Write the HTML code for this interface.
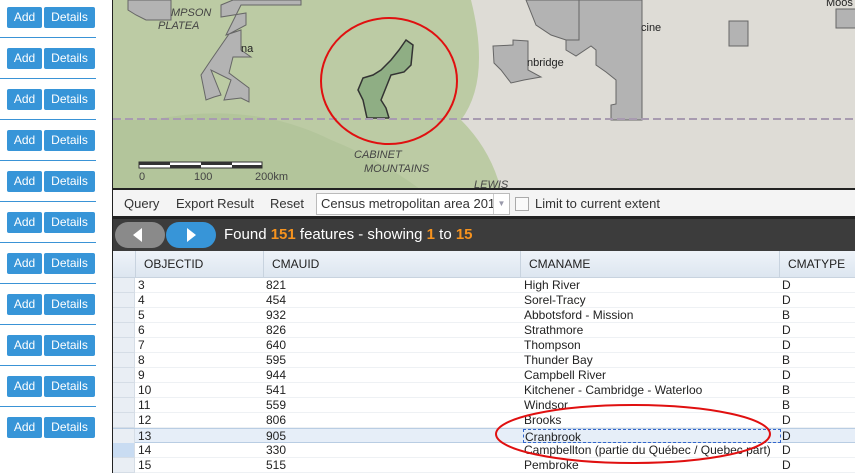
<!DOCTYPE html>
<html><head><meta charset="utf-8"><style>
*{margin:0;padding:0;box-sizing:border-box}
body{width:855px;height:473px;overflow:hidden;background:#fff;font-family:"Liberation Sans",sans-serif;position:relative}
.lp{position:absolute;left:0;top:0;width:112px;height:473px;background:#fff}
.r{position:absolute;left:0;width:96px;height:41px;border-bottom:1px solid #3a93d6}
.b{position:absolute;top:10px;height:21px;background:#3795d8;color:#fff;font-size:12px;line-height:21px;text-align:center;border-radius:2px}
.map{position:absolute;left:112px;top:0;width:743px;height:190px;border-left:1px solid #222;border-bottom:2px solid #222;overflow:hidden}
.tb{position:absolute;left:112px;top:190px;width:743px;height:29px;background:#f4f4f4;border-left:1px solid #222;border-bottom:3px solid #222;font-size:13px;color:#333}
.tb span{position:absolute;top:6px}
.bar{position:absolute;left:112px;top:219px;width:743px;height:32px;background:#3c3c3c;border-left:1px solid #222}
.grid{position:absolute;left:112px;top:251px;width:743px;height:222px;border-left:1px solid #222;background:#fff;font-size:12px;color:#222}
.hd{position:absolute;top:0;height:27px;background:linear-gradient(#eef3f9,#dde6f0);border-right:1px solid #c8d3df;border-bottom:1px solid #c8d3df;font-size:12px;line-height:27px;padding-left:8px;color:#222}
.row{position:absolute;left:0;width:743px;height:15px;border-bottom:1px solid #eef1f4;line-height:14px}
.row span{position:absolute;top:0}
.rh{position:absolute;left:0;width:22px;height:15px;background:#e9eef4;border-bottom:1px solid #d5dde6;border-right:1px solid #d5dde6}
</style></head><body>
<div class="lp">
<div class="r" style="top:-3px"><div class="b" style="left:7px;width:35px">Add</div><div class="b" style="left:44px;width:51px">Details</div></div>
<div class="r" style="top:38px"><div class="b" style="left:7px;width:35px">Add</div><div class="b" style="left:44px;width:51px">Details</div></div>
<div class="r" style="top:79px"><div class="b" style="left:7px;width:35px">Add</div><div class="b" style="left:44px;width:51px">Details</div></div>
<div class="r" style="top:120px"><div class="b" style="left:7px;width:35px">Add</div><div class="b" style="left:44px;width:51px">Details</div></div>
<div class="r" style="top:161px"><div class="b" style="left:7px;width:35px">Add</div><div class="b" style="left:44px;width:51px">Details</div></div>
<div class="r" style="top:202px"><div class="b" style="left:7px;width:35px">Add</div><div class="b" style="left:44px;width:51px">Details</div></div>
<div class="r" style="top:243px"><div class="b" style="left:7px;width:35px">Add</div><div class="b" style="left:44px;width:51px">Details</div></div>
<div class="r" style="top:284px"><div class="b" style="left:7px;width:35px">Add</div><div class="b" style="left:44px;width:51px">Details</div></div>
<div class="r" style="top:325px"><div class="b" style="left:7px;width:35px">Add</div><div class="b" style="left:44px;width:51px">Details</div></div>
<div class="r" style="top:366px"><div class="b" style="left:7px;width:35px">Add</div><div class="b" style="left:44px;width:51px">Details</div></div>
<div class="r" style="top:407px;border:none"><div class="b" style="left:7px;width:35px">Add</div><div class="b" style="left:44px;width:51px">Details</div></div>
</div>
<div class="map">
<svg width="743" height="190" viewBox="112 0 743 190" xmlns="http://www.w3.org/2000/svg">
<rect x="112" y="0" width="743" height="190" fill="#dedcd6"/>
<path d="M112 0H470Q490 80 460 120Q490 150 500 190H112Z" fill="#bccba4"/>
<path d="M150 120Q250 100 330 140Q380 160 420 190H112V120Z" fill="#a9bf91" opacity=".5"/>
<path d="M232 0L220 5V17L245 13V25L228 34L210 60L200 75L205 100L213 97L220 95L210 70L230 80L223 100L240 98L248 102V88L228 73L232 57H250L240 50V30L225 35L240 5H300V0Z" fill="#b3b3b3" stroke="#666"/>
<path d="M127 0V10L135 15L145 20H170V0Z" fill="#b3b3b3" stroke="#666"/>
<path d="M525 0L535 25L550 35L565 40H578V0Z" fill="#b3b3b3" stroke="#666"/>
<path d="M578 0V40H565L565 50L575 56L590 46L595 50V65L605 72L615 80V104L610 105V120H641V0Z" fill="#b3b3b3" stroke="#666"/>
<path d="M492 46L512 45V40L527 41V70L540 77L523 80L510 83L500 70L493 63Z" fill="#b3b3b3" stroke="#666"/>
<rect x="728" y="21" width="19" height="25" fill="#b3b3b3" stroke="#666"/>
<rect x="835" y="9" width="20" height="19" fill="#b3b3b3" stroke="#666"/>
<path d="M405 40L412 45L410 65L403 72L390 75L384 90L380 100L385 108L388 118H366L362 100L357 90L362 78L372 75L380 70L390 60L398 50Z" fill="#8fae84" stroke="#333" stroke-width="1.5"/>
<line x1="112" y1="119" x2="855" y2="119" stroke="#a89bb0" stroke-width="2" stroke-dasharray="8 4"/>
<ellipse cx="388" cy="81" rx="68" ry="63" fill="none" stroke="#e01010" stroke-width="2"/>
<rect x="138" y="162" width="123" height="6" fill="#fff" stroke="#333"/>
<rect x="138" y="162" width="31" height="3" fill="#333"/><rect x="200" y="162" width="31" height="3" fill="#333"/>
<rect x="169" y="165" width="31" height="3" fill="#333"/><rect x="231" y="165" width="30" height="3" fill="#333"/>
<g font-family="Liberation Sans" font-size="11" fill="#444">
<text x="138" y="180">0</text><text x="193" y="180">100</text><text x="254" y="180">200km</text>
<text x="170" y="16" font-style="italic">MPSON</text><text x="157" y="29" font-style="italic">PLATEA</text>
<text x="353" y="158" font-style="italic">CABINET</text><text x="363" y="172" font-style="italic">MOUNTAINS</text>
<text x="473" y="188" font-style="italic">LEWIS</text>
<text x="240" y="52" fill="#222">na</text><text x="526" y="66" fill="#222">nbridge</text><text x="640" y="31" fill="#222">cine</text><text x="825" y="6" fill="#222">Moos</text>
</g>
</svg>
</div>
<div class="tb">
<span style="left:11px">Query</span><span style="left:63px">Export Result</span><span style="left:157px">Reset</span>
<div style="position:absolute;left:203px;top:3px;width:194px;height:22px;background:#fff;border:1px solid #bbb;font-size:13px;line-height:20px;padding-left:4px;color:#333;overflow:hidden;white-space:nowrap">Census metropolitan area 201<div style="position:absolute;right:0;top:0;width:16px;height:20px;border-left:1px solid #ccc;background:#fff;color:#99a;font-size:8px;text-align:center">▼</div></div>
<div style="position:absolute;left:402px;top:7px;width:14px;height:14px;border:1px solid #aaa;background:#fafafa"></div>
<span style="left:422px">Limit to current extent</span>
</div>
<div class="bar">
<div style="position:absolute;left:2px;top:3px;width:50px;height:26px;border-radius:13px;background:#8a8a8a"></div>
<div style="position:absolute;left:20px;top:9px;width:0;height:0;border-top:7px solid transparent;border-bottom:7px solid transparent;border-right:9px solid #fff"></div>
<div style="position:absolute;left:53px;top:3px;width:50px;height:26px;border-radius:13px;background:#3795d8"></div>
<div style="position:absolute;left:74px;top:9px;width:0;height:0;border-top:7px solid transparent;border-bottom:7px solid transparent;border-left:9px solid #fff"></div>
<div style="position:absolute;left:111px;top:7px;color:#fff;font-size:15px">Found <b style="color:#f7931e">151</b> features - showing <b style="color:#f7931e">1</b> to <b style="color:#f7931e">15</b></div>
</div>
<div class="grid">
<div class="hd" style="left:0;width:23px;padding:0"></div>
<div class="hd" style="left:23px;width:128px">OBJECTID</div>
<div class="hd" style="left:151px;width:257px">CMAUID</div>
<div class="hd" style="left:408px;width:259px">CMANAME</div>
<div class="hd" style="left:667px;width:76px">CMATYPE</div>
<div class="row" style="top:27px"><div class="rh"></div><span style="left:25px">3</span><span style="left:153px">821</span><span style="left:411px">High River</span><span style="left:669px">D</span></div>
<div class="row" style="top:42px"><div class="rh"></div><span style="left:25px">4</span><span style="left:153px">454</span><span style="left:411px">Sorel-Tracy</span><span style="left:669px">D</span></div>
<div class="row" style="top:57px"><div class="rh"></div><span style="left:25px">5</span><span style="left:153px">932</span><span style="left:411px">Abbotsford - Mission</span><span style="left:669px">B</span></div>
<div class="row" style="top:72px"><div class="rh"></div><span style="left:25px">6</span><span style="left:153px">826</span><span style="left:411px">Strathmore</span><span style="left:669px">D</span></div>
<div class="row" style="top:87px"><div class="rh"></div><span style="left:25px">7</span><span style="left:153px">640</span><span style="left:411px">Thompson</span><span style="left:669px">D</span></div>
<div class="row" style="top:102px"><div class="rh"></div><span style="left:25px">8</span><span style="left:153px">595</span><span style="left:411px">Thunder Bay</span><span style="left:669px">B</span></div>
<div class="row" style="top:117px"><div class="rh"></div><span style="left:25px">9</span><span style="left:153px">944</span><span style="left:411px">Campbell River</span><span style="left:669px">D</span></div>
<div class="row" style="top:132px"><div class="rh"></div><span style="left:25px">10</span><span style="left:153px">541</span><span style="left:411px">Kitchener - Cambridge - Waterloo</span><span style="left:669px">B</span></div>
<div class="row" style="top:147px"><div class="rh"></div><span style="left:25px">11</span><span style="left:153px">559</span><span style="left:411px">Windsor</span><span style="left:669px">B</span></div>
<div class="row" style="top:162px"><div class="rh"></div><span style="left:25px">12</span><span style="left:153px">806</span><span style="left:411px">Brooks</span><span style="left:669px">D</span></div>
<div class="row" style="top:177px;background:#e6eef8;border-top:1px solid #b9cde3;border-bottom:1px solid #b9cde3"><div class="rh"></div><span style="left:25px">13</span><span style="left:153px">905</span><span style="left:410px;width:258px;height:14px;border:1px dashed #3366cc;padding-left:1px">Cranbrook</span><span style="left:669px">D</span></div>
<div class="row" style="top:192px"><div class="rh" style="background:#c9dcf2"></div><span style="left:25px">14</span><span style="left:153px">330</span><span style="left:411px">Campbellton (partie du Québec / Quebec part)</span><span style="left:669px">D</span></div>
<div class="row" style="top:207px"><div class="rh"></div><span style="left:25px">15</span><span style="left:153px">515</span><span style="left:411px">Pembroke</span><span style="left:669px">D</span></div>
<svg style="position:absolute;left:0;top:0" width="743" height="222"><ellipse cx="520" cy="183" rx="137" ry="29" fill="none" stroke="#e01010" stroke-width="2"/></svg>
</div>
</body></html>
